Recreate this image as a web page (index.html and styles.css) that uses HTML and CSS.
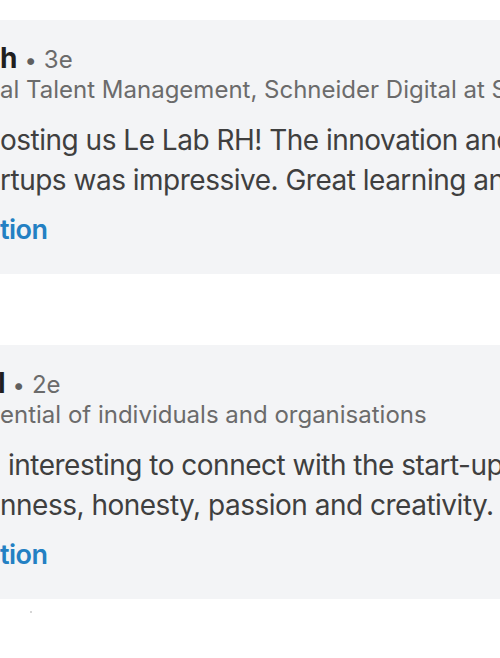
FILE: index.html
```html
<!DOCTYPE html>
<html lang="en">
<head>
<meta charset="utf-8">
<title>Comments</title>
<link rel="stylesheet" href="styles.css">
</head>
<body>
<div class="feed">
  <article class="comment">
    <div class="meta"><span class="name">h</span><span class="dot">•</span><span class="time">3e</span></div>
    <div class="headline">al Talent Management, Schneider Digital at Schneider</div>
    <p class="text">osting us Le Lab RH! The innovation and<br>rtups was impressive. Great learning and</p>
    <div class="translate">tion</div>
  </article>
  <article class="comment">
    <div class="meta"><span class="name name-l">l</span><span class="dot">•</span><span class="time">2e</span></div>
    <div class="headline">ential of individuals and organisations</div>
    <p class="text"><span class="lead">interesting to connect with the start-ups</span><br>nness, honesty, passion and creativity.</p>
    <div class="translate">tion</div>
  </article>
  <div class="speck"></div>
</div>
</body>
</html>
```

FILE: styles.css
```css
html, body {
  margin: 0;
  padding: 0;
  background: #ffffff;
  overflow: hidden;
}
body {
  width: 500px;
  height: 658px;
  font-family: Inter, "Noto Sans", "Liberation Sans", sans-serif;
}
.feed {
  padding-top: 20px;
  display: flex;
  flex-direction: column;
  gap: 71px;
}
.comment {
  background: #f3f4f6;
  padding: 22px 0 24px 0;
  white-space: nowrap;
  overflow: hidden;
}
.meta {
  display: flex;
  align-items: baseline;
  line-height: 32px;
  height: 32px;
}
.name {
  font-size: 28px;
  font-weight: 700;
  color: #1f1f1f;
}
.name-l {
  margin-left: -2px;
}
.dot {
  font-size: 22px;
  color: #5f5f5f;
  margin: 0 7px 0 7px;
}
.time {
  font-size: 24px;
  color: #6b6b6b;
}
.headline {
  margin-top: 0;
  font-size: 24px;
  line-height: 32px;
  color: #6b6b6b;
}
.text {
  margin: 14px 0 0 0;
  font-size: 28px;
  line-height: 40px;
  letter-spacing: -0.5px;
  color: #3f3f3f;
}
.lead {
  padding-left: 8px;
}
.translate {
  margin-top: 10px;
  font-size: 27px;
  line-height: 40px;
  font-weight: 600;
  letter-spacing: -0.5px;
  color: #2380c3;
}
.speck {
  width: 2px;
  height: 2px;
  margin: -59px 0 0 30px;
  background: #c8c8c8;
  border-radius: 1px;
}
```
